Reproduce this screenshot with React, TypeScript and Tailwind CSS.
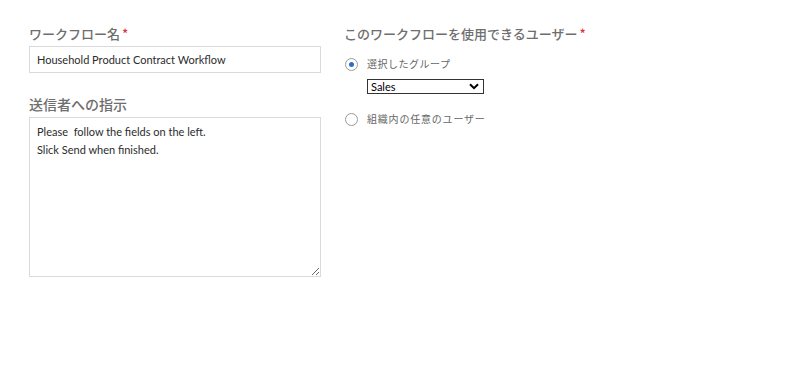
import { useState } from 'react'

const jp = { fontFamily: '"Noto Sans CJK JP", "Noto Sans", sans-serif' }
const latin = { fontFamily: 'Lato, "Noto Sans CJK JP", sans-serif' }

function Radio({ checked }: { checked: boolean }) {
  return (
    <span className="flex h-[13px] w-[13px] items-center justify-center rounded-full border border-[#9a9a9a] bg-white">
      {checked && <span className="h-[5px] w-[5px] rounded-full bg-[#2d6fc6]" />}
    </span>
  )
}

export default function App() {
  const [name, setName] = useState('Household Product Contract Workflow')
  const [note, setNote] = useState('Please  follow the fields on the left.\nSlick Send when finished.')
  const [who, setWho] = useState<'group' | 'any'>('group')

  return (
    <div className="flex h-[372px] w-[795px] gap-[23px] bg-white pl-[29px] pt-[25px]">
      <div className="flex w-[292px] flex-col">
        <div className="text-[13px] leading-[18px] text-[#6e6e6e] font-medium" style={jp}>
          ワークフロー名<span className="ml-[2px] text-[#d7373f]">*</span>
        </div>
        <input
          value={name}
          onChange={e => setName(e.target.value)}
          className="mt-[3px] h-[27px] w-[292px] border border-[#dadada] px-[7px] text-[11px] text-[#2c2c2c] outline-none"
          style={latin}
        />
        <div className="mt-[21px] text-[14px] leading-[20px] text-[#6e6e6e] font-medium" style={jp}>
          送信者への指示
        </div>
        <textarea
          value={note}
          onChange={e => setNote(e.target.value)}
          className="mt-[3px] h-[160px] w-[292px] resize-y border border-[#dadada] px-[7px] pt-[5px] text-[11px] leading-[18px] text-[#2c2c2c] outline-none"
          style={latin}
        />
      </div>
      <div className="flex flex-col">
        <div className="text-[13px] leading-[18px] text-[#6e6e6e] font-medium" style={jp}>
          このワークフローを使用できるユーザー<span className="ml-[2px] text-[#d7373f]">*</span>
        </div>
        <label className="mt-[14px] flex items-center gap-[9px] pl-[1px]" onClick={() => setWho('group')}>
          <Radio checked={who === 'group'} />
          <span className="text-[10px] leading-[14px] tracking-[0.5px] text-[#666]" style={jp}>選択したグループ</span>
        </label>
        <div className="mt-[8px] pl-[23px]">
          <div className="flex h-[15px] w-[117px] items-center justify-between border border-[#333] bg-white pl-[3px] pr-[4px]">
            <span className="text-[11px] leading-none text-black" style={latin}>Sales</span>
            <svg width="10" height="7" viewBox="0 0 10 7">
              <path d="M1 1.2 5 5.2 9 1.2" fill="none" stroke="#000" strokeWidth="2" />
            </svg>
          </div>
        </div>
        <label className="mt-[18px] flex items-center gap-[9px] pl-[1px]" onClick={() => setWho('any')}>
          <Radio checked={who === 'any'} />
          <span className="text-[10px] leading-[14px] tracking-[0.8px] text-[#666]" style={jp}>組織内の任意のユーザー</span>
        </label>
      </div>
    </div>
  )
}
